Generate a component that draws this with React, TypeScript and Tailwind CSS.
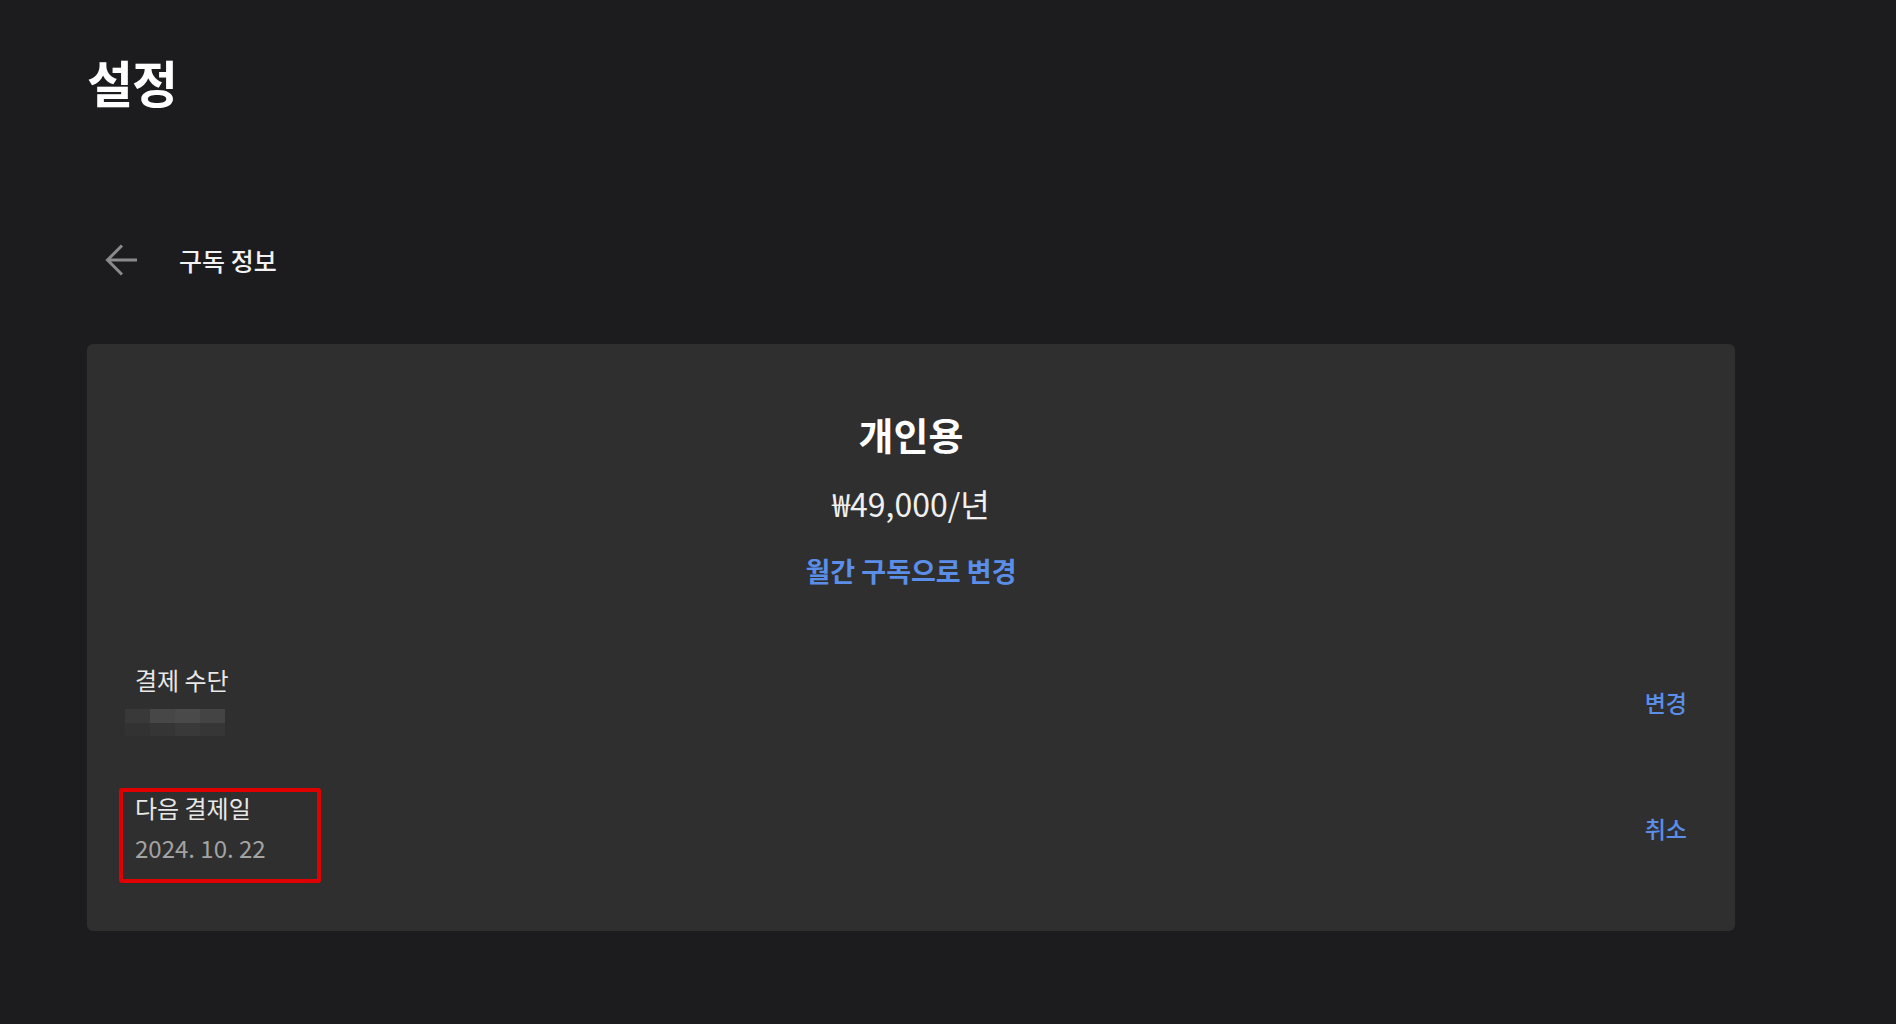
import React from 'react';

const font = { fontFamily: '"Noto Sans CJK KR", "Noto Sans", sans-serif' };

const blurCells = [
  'bg-[#393939]', 'bg-[#474747]', 'bg-[#4a4a4a]', 'bg-[#444444]',
  'bg-[#323232]', 'bg-[#353535]', 'bg-[#393939]', 'bg-[#363636]',
];

function BackArrow() {
  return (
    <svg width="34" height="34" viewBox="0 0 34 34" fill="none" className="shrink-0">
      <path d="M33 17H3.5M18 2.5L3.5 17L18 31.5" stroke="#8a8a8a" strokeWidth="3" />
    </svg>
  );
}

function Row({ action, children }: { action: string; children: React.ReactNode }) {
  return (
    <div className="flex items-center justify-between px-12">
      <div>{children}</div>
      <button className="text-[23px] leading-none font-medium text-[#5a8ee8]">{action}</button>
    </div>
  );
}

export default function App() {
  return (
    <div className="min-h-screen bg-[#1c1c1e] pl-[87px] pt-[56px] pb-20" style={font}>
      <h1 className="text-[50px] leading-none font-bold tracking-[-1px] text-white">설정</h1>

      <div className="mt-[137px] flex h-[34px] items-center">
        <button className="ml-[17px]">
          <BackArrow />
        </button>
        <span className="ml-[41px] text-[25px] leading-none font-medium text-[#f2f2f2]">구독 정보</span>
      </div>

      <div className="mt-[67px] w-[1648px] rounded-md bg-[#2f2f2f] pt-[71px] pb-[71px]">
        <div className="flex flex-col items-center">
          <h2 className="text-[38px] leading-none font-bold text-white">개인용</h2>
          <p className="mt-[34px] text-[32px] leading-none text-[#f0f0f0]">₩49,000/년</p>
          <button className="mt-[38px] text-[27px] leading-none font-bold text-[#5a8ee8]">
            월간 구독으로 변경
          </button>
        </div>

        <div className="mt-[84px]">
          <Row action="변경">
            <p className="text-[24px] leading-none text-[#e8e8e8]">결제 수단</p>
            <div className="-ml-[10px] mt-[17px] grid h-[27px] w-[100px] grid-cols-4">
              {blurCells.map((c, i) => (
                <div key={i} className={c} />
              ))}
            </div>
          </Row>
        </div>

        <div className="mt-[60px]">
          <Row action="취소">
            <div className="relative">
              <p className="text-[24px] leading-none text-[#e8e8e8]">다음 결제일</p>
              <p className="mt-[16px] text-[24px] leading-none text-[#a3a3a3]">2024. 10. 22</p>
              <div className="absolute -left-[16px] -top-[8px] h-[95px] w-[202px] rounded-[3px] border-4 border-[#e00000]" />
            </div>
          </Row>
        </div>
      </div>
    </div>
  );
}
